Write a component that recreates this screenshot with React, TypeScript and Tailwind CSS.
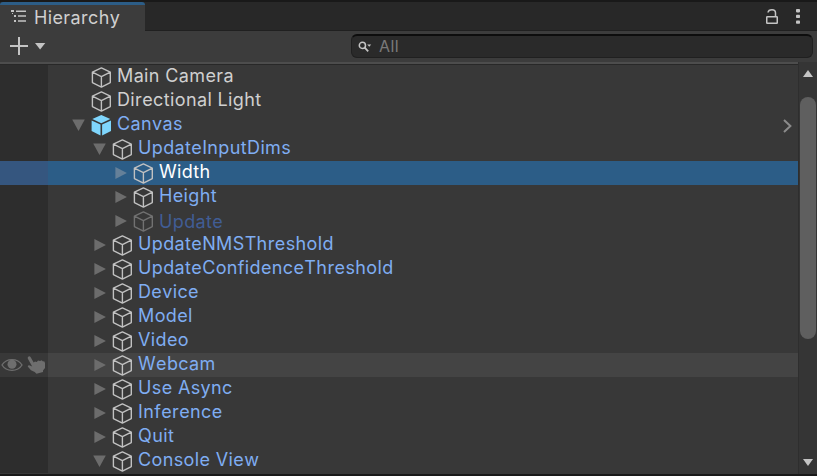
type Item = { name: string; level: number; arrow?: 'right' | 'down'; tone?: 'plain' | 'dim' | 'prefab'; state?: 'selected' | 'hover' };

const items: Item[] = [
  { name: 'Main Camera', level: 0, tone: 'plain' },
  { name: 'Directional Light', level: 0, tone: 'plain' },
  { name: 'Canvas', level: 0, arrow: 'down', tone: 'prefab' },
  { name: 'UpdateInputDims', level: 1, arrow: 'down' },
  { name: 'Width', level: 2, arrow: 'right', state: 'selected' },
  { name: 'Height', level: 2, arrow: 'right' },
  { name: 'Update', level: 2, arrow: 'right', tone: 'dim' },
  { name: 'UpdateNMSThreshold', level: 1, arrow: 'right' },
  { name: 'UpdateConfidenceThreshold', level: 1, arrow: 'right' },
  { name: 'Device', level: 1, arrow: 'right' },
  { name: 'Model', level: 1, arrow: 'right' },
  { name: 'Video', level: 1, arrow: 'right' },
  { name: 'Webcam', level: 1, arrow: 'right', state: 'hover' },
  { name: 'Use Async', level: 1, arrow: 'right' },
  { name: 'Inference', level: 1, arrow: 'right' },
  { name: 'Quit', level: 1, arrow: 'right' },
  { name: 'Console View', level: 1, arrow: 'down' },
];

const indents = ['pl-[24px]', 'pl-[45px]', 'pl-[66px]'];

function Cube({ tone }: { tone?: string }) {
  if (tone === 'prefab') {
    return (
      <svg className="mt-[2px] h-[21px] w-5 shrink-0" viewBox="0 0 20 21">
        <path d="M10.3 0 19.3 4 10.3 8.2 1.3 4Z" fill="#7fd6fd" />
        <path d="M.6 5.6 9.5 9.6V20.5L.6 16Z" fill="#7fd6fd" />
        <path d="M20 5.6 11.1 9.6V20.5L20 16Z" fill="#7fd6fd" />
      </svg>
    );
  }
  return (
    <svg
      className={`mt-[2px] h-[21px] w-5 shrink-0 ${tone === 'dim' ? 'text-[#717171]' : 'text-[#c1c1c1]'}`}
      viewBox="0 0 20 21" fill="none" stroke="currentColor" strokeWidth="1.4" strokeLinejoin="round"
    >
      <path d="M10.4 .9 19.3 5.2V15.6L10.4 20.1 1.4 15.6V5.2ZM1.4 5.2 10.4 9.6 19.3 5.2M10.4 9.6V20.1" />
    </svg>
  );
}

function Arrow({ dir, selected }: { dir?: string; selected: boolean }) {
  return (
    <svg className={`mt-[6px] mr-[6px] h-3 w-[13px] shrink-0 ${selected ? 'text-[#658099]' : 'text-[#6c6c6c]'}`} viewBox="0 0 13 12" fill="currentColor">
      {dir === 'right' && <path d="M1.4 0 12.9 6 1.4 12Z" />}
      {dir === 'down' && <path d="M.2 .4H12.8L6.5 12Z" />}
    </svg>
  );
}

function Row({ item }: { item: Item }) {
  const selected = item.state === 'selected';
  const hover = item.state === 'hover';
  const gutter = selected ? 'bg-[#35567f]' : hover ? 'bg-[#383838]' : 'bg-[#2d2d2d]';
  const body = selected ? 'bg-[#2c5d87]' : hover ? 'bg-[#444444]' : '';
  const text = selected ? 'text-white' : item.tone === 'plain' ? 'text-[#d0d0d0]' : item.tone === 'dim' ? 'text-[#415d95]' : 'text-[#7fadf2]';
  return (
    <div className="flex h-6 shrink-0">
      <div className={`flex w-12 shrink-0 ${gutter}`}>
        {hover && (
          <>
            <svg className="mt-[5px] ml-px h-[14px] w-[22px]" viewBox="0 0 22 14">
              <path d="M1 7C5.5-.2 16.5-.2 21 7 16.5 14.2 5.5 14.2 1 7Z" fill="none" stroke="#6e6e6e" strokeWidth="1.4" />
              <circle cx="11" cy="6.3" r="4.5" fill="#6e6e6e" />
            </svg>
            <svg className="mt-[3px] ml-[4px] h-[18px] w-[19px]" viewBox="0 0 19 18">
              <path d="M1.2.7Q2.8-.3 3.8 1.5L6.7 6.6 8 5.5 9.8 6 11 4.4 13 5 14.7 4.2 16 5.4 17.2 5.3 18 7V12L16 14.6V16L9.5 17.7 7.7 15.9 4 14.2.7 10.5Q1.1 9 2.8 9.4L5.2 10.5 1 3Q.4 1.6 1.2.7Z" fill="#6e6e6e" />
            </svg>
          </>
        )}
      </div>
      <div className={`flex min-w-0 grow ${body} ${indents[item.level]}`}>
        <Arrow dir={item.arrow} selected={selected} />
        <Cube tone={item.tone} />
        <span className={`ml-[6px] grow whitespace-nowrap leading-[22px] ${item.tone === 'dim' ? 'mt-[2px]' : ''} ${text}`}>{item.name}</span>
        {item.tone === 'prefab' && (
          <svg className="mt-[6px] mr-[6px] h-[14px] w-[9px]" viewBox="0 0 9 14" fill="none" stroke="#8b8b8b" strokeWidth="2">
            <path d="M1 1 7.4 7 1 13" />
          </svg>
        )}
      </div>
    </div>
  );
}

export default function App() {
  return (
    <div className="flex h-[476px] w-[817px] flex-col overflow-hidden bg-[#383838] font-['Inter',sans-serif] text-[18px] font-[370] tracking-[0.37px] [font-kerning:none] [font-optical-sizing:none]">
      <header className="flex h-[31px] shrink-0 border-t-2 border-[#191919] bg-[#282828]">
        <div className="flex w-[145px] rounded-t-[3px] border-t-[3px] border-[#2c5d87] bg-[#3c3c3c] pl-[11px] text-[#d0d0d0]">
          <svg className="mt-[5px] h-3 w-4" viewBox="0 0 16 12" fill="#c4c4c4">
            <path d="M0 0H3V2H0ZM5 .6H15V2H5ZM3 5H5V7H3ZM7 5.3H15V6.7H7ZM3 10H5V12H3ZM7 10.3H15V11.7H7ZM1 3H2V4H1Z" />
          </svg>
          <span className="ml-[7px] leading-[26px]">Hierarchy</span>
        </div>
        <div className="flex grow justify-end border-b border-[#202020] pr-[17px]">
          <svg className="mt-[7px] mr-[18px] h-4 w-3" viewBox="0 0 12 16" fill="none" stroke="#c4c4c4" strokeWidth="1.5">
            <rect x=".75" y="7.75" width="10.5" height="6.5" rx=".5" />
            <path d="M2 3.5Q2.4.8 6 .8 9.5.8 9.5 4V7.5" />
          </svg>
          <svg className="mt-[7px] h-[15px] w-[4px]" viewBox="0 0 4 15" fill="#c4c4c4">
            <rect width="4" height="3.4" rx=".8" /><rect y="5.7" width="4" height="3.4" rx=".8" /><rect y="11.4" width="4" height="3.4" rx=".8" />
          </svg>
        </div>
      </header>
      <div className="flex h-[31px] shrink-0 bg-[#3c3c3c]">
        <svg className="mt-[6px] ml-[10px] h-[18px] w-[36px]" viewBox="0 0 36 18">
          <path d="M0 9H18M9 0V18" stroke="#c4c4c4" strokeWidth="2" />
          <path d="M25 6H35.3L30.1 12.5Z" fill="#c4c4c4" />
        </svg>
        <div className="mt-[3px] ml-auto mr-[4px] flex h-6 w-[462px] rounded-[6px] border border-t-2 border-[#202020] border-t-[#0d0d0d] bg-[#2a2a2a] text-[16px] text-[#7a7a7a]">
          <svg className="mt-[5px] ml-[6px] h-3 w-[14px]" viewBox="0 0 14 12" fill="none" stroke="#c4c4c4" strokeWidth="1.5">
            <circle cx="4.4" cy="4.4" r="3.1" /><path d="M6.7 6.7 10.2 10.4" strokeWidth="1.8" /><path d="M9.2 3.5H13.2L11.2 5.8Z" fill="#c4c4c4" stroke="none" />
          </svg>
          <span className="ml-[7px] leading-[21px]">All</span>
        </div>
      </div>
      <div className="flex min-h-0 grow">
        <main className="flex w-[798px] shrink-0 flex-col overflow-hidden border-t-2 border-[#4d4d4d]">
          <div className="h-px shrink-0 bg-[#282828]" />
          {items.map((item) => <Row key={item.name} item={item} />)}
        </main>
        <aside className="flex grow flex-col items-center border-l border-[#2e2e2e] bg-[#353535]">
          <svg className="mt-[8px] h-[7px] w-[10px]" viewBox="0 0 10 7" fill="#c4c4c4"><path d="M0 7 5 0 10 7Z" /></svg>
          <div className="mt-[20px] h-[242px] w-4 rounded-full bg-[#5f5f5f]" />
          <svg className="mt-auto mb-[8px] h-[7px] w-[10px]" viewBox="0 0 10 7" fill="#c4c4c4"><path d="M0 0H10L5 7Z" /></svg>
        </aside>
      </div>
      <footer className="h-[2px] shrink-0 bg-[#191919]" />
    </div>
  );
}
